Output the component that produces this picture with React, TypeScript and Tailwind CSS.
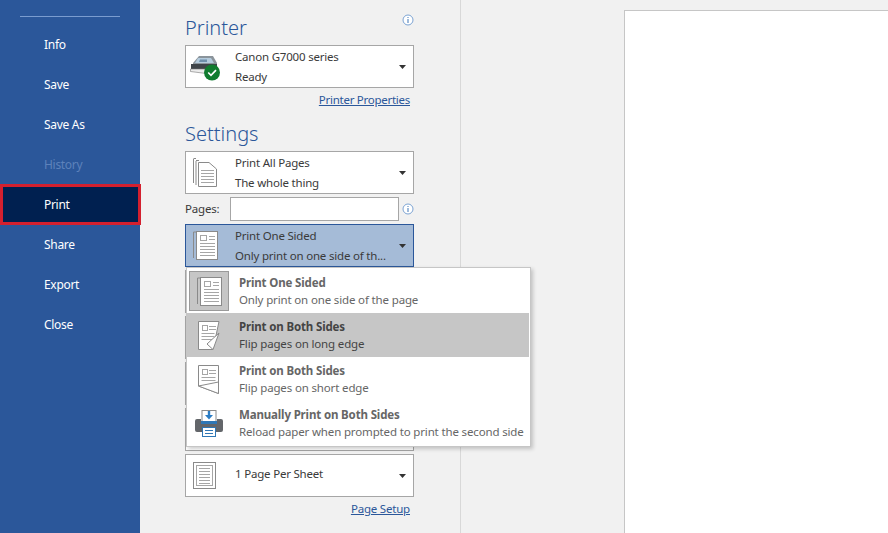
const font = "font-['Noto_Sans','Open_Sans',sans-serif]";

function Caret() {
  return (
    <svg width="7" height="4" viewBox="0 0 7 4" className="mr-[1px] shrink-0">
      <path d="M0 0H7L3.5 4Z" fill="#333" />
    </svg>
  );
}

function Info() {
  return (
    <svg width="12" height="12" viewBox="0 0 12 12">
      <circle cx="6" cy="6" r="5" fill="#fff" stroke="#7ba3d3" />
      <rect x="5.5" y="3" width="1" height="1" fill="#3f77b8" />
      <rect x="5.5" y="5" width="1" height="4" fill="#3f77b8" />
    </svg>
  );
}

function PrinterIcon() {
  return (
    <svg width="30" height="26" viewBox="0 0 30 26">
      <path d="M3 8 L9 1 H23 L27 8 V14 H3Z" fill="#8b949b" />
      <path d="M8 3 H21 L24 8 H5Z" fill="#b4cbdd" />
      <path d="M10 4.5 H17 V7 H9Z" fill="#6f8fab" />
      <rect x="1" y="9" width="26" height="5" fill="#3f4449" />
      <path d="M0.5 14 H20 V19 L0.5 16.5Z" fill="#ececec" stroke="#777" strokeWidth="0.6" />
      <circle cx="22" cy="17.5" r="8" fill="#107c2f" />
      <path d="M18.2 17.5 L21 20.3 L26 15.2" stroke="#fff" strokeWidth="1.7" fill="none" />
    </svg>
  );
}

function Lines({ x, y, w, n, gap = 3 }: { x: number; y: number; w: number; n: number; gap?: number }) {
  return (
    <>
      {Array.from({ length: n }).map((_, i) => (
        <rect key={i} x={x} y={y + i * gap} width={w} height="1" fill="#a6a6a6" />
      ))}
    </>
  );
}

function StackIcon() {
  return (
    <svg width="24" height="29" viewBox="0 0 24 29">
      <path d="M.5 1 V25 M.5 .5 H3" stroke="#8a8a8a" fill="none" />
      <path d="M3 3 V27 M3 2.5 H6" stroke="#8a8a8a" fill="none" />
      <path d="M5.5 4.5 H16 L23.5 11 V28.5 H5.5Z" fill="#fff" stroke="#8a8a8a" />
      <Lines x={8} y={12} w={13} n={5} gap={3} />
    </svg>
  );
}

function SidedIcon({ stroke = "#8a8a8a" }: { stroke?: string }) {
  return (
    <svg width="25" height="29" viewBox="0 0 25 29">
      <path d="M.5 1 V27 M3 1 H.5" stroke={stroke} fill="none" />
      <rect x="3.5" y=".5" width="21" height="28" fill="#fff" stroke={stroke} />
      <rect x="7.5" y="4.5" width="6" height="5" fill="none" stroke="#a6a6a6" />
      <Lines x={16} y={5} w={6} n={2} gap={3} />
      <Lines x={7} y={12} w={15} n={5} gap={3} />
    </svg>
  );
}

function LongEdgeIcon() {
  return (
    <svg width="22" height="29" viewBox="0 0 22 29">
      <path d="M.5 .5 H21 L15 28.5 H.5Z" fill="#fff" stroke="#8a8a8a" />
      <rect x="4.5" y="4.5" width="5" height="5" fill="none" stroke="#a6a6a6" />
      <Lines x={11} y={5} w={7} n={2} gap={3} />
      <Lines x={3.5} y={12} w={13} n={3} gap={3} />
      <path d="M21 12 L15 28.5 L9 23Z" fill="#fff" stroke="#8a8a8a" />
    </svg>
  );
}

function ShortEdgeIcon() {
  return (
    <svg width="22" height="29" viewBox="0 0 22 29">
      <path d="M.5 .5 H20.5 V28.5 L.5 21Z" fill="#fff" stroke="#8a8a8a" />
      <rect x="4.5" y="4.5" width="5" height="5" fill="none" stroke="#a6a6a6" />
      <Lines x={11} y={5} w={7} n={2} gap={3} />
      <Lines x={3.5} y={12} w={14} n={2} gap={3} />
      <path d="M.5 21 L20.5 17 V28.5Z" fill="#fff" stroke="#8a8a8a" />
    </svg>
  );
}

function ManualIcon() {
  return (
    <svg width="28" height="27" viewBox="0 0 28 27">
      <rect x="7" y=".5" width="14" height="11" fill="#fff" stroke="#8a8a8a" />
      <path d="M14 1 V6" stroke="#2b7cc4" strokeWidth="2.4" />
      <path d="M10 5 H18 L14 9.5Z" fill="#2b7cc4" />
      <path d="M2 9 H6 V12 H22 V9 H26 Q28 9 28 11 V20 Q28 22 26 22 H2 Q0 22 0 20 V11 Q0 9 2 9Z" fill="#63666a" />
      <rect x="6" y="11" width="16" height="3" fill="#2f77b5" />
      <rect x="7.5" y="17.5" width="13" height="9" fill="#fff" stroke="#2f77b5" />
      <path d="M10 20.5 H18 M10 23.5 H18" stroke="#2f77b5" />
    </svg>
  );
}

function SheetIcon() {
  return (
    <svg width="23" height="27" viewBox="0 0 23 27">
      <rect x=".5" y=".5" width="22" height="26" fill="#fff" stroke="#8a8a8a" />
      <rect x="3.5" y="3.5" width="16" height="20" fill="none" stroke="#a6a6a6" />
      <Lines x={6} y={6} w={11} n={6} gap={3} />
    </svg>
  );
}

function Dropdown({
  icon,
  title,
  sub,
  active,
}: {
  icon?: React.ReactNode;
  title?: string;
  sub?: string;
  active?: boolean;
}) {
  return (
    <div
      className={`flex h-[43px] w-[229px] items-center border pr-[6px] ${
        active ? "border-[#2b579a] bg-[#a5bbd7]" : "border-[#a6a6a6] bg-white"
      }`}
    >
      <div className="flex w-[49px] shrink-0 pl-[7px]">{icon}</div>
      <div
        className={`flex-1 text-[11.5px] leading-[20px] tracking-[-0.2px] whitespace-nowrap text-[#3a3a3a] ${
          sub ? "" : "pb-[3px]"
        }`}
      >
        {title && <div>{title}</div>}
        {sub && <div>{sub}</div>}
      </div>
      {(title || sub) && <Caret />}
    </div>
  );
}

function MenuItem({
  icon,
  title,
  sub,
  selected,
  hover,
}: {
  icon: React.ReactNode;
  title: string;
  sub: string;
  selected?: boolean;
  hover?: boolean;
}) {
  return (
    <div className={`mr-px flex h-[44px] items-center ${hover ? "bg-[#c6c6c6]" : ""}`}>
      <div
        className={`ml-[2px] flex h-[40px] w-[40px] items-center justify-center ${
          selected ? "border border-[#9a9a9a] bg-[#c6c6c6]" : ""
        }`}
      >
        {icon}
      </div>
      <div
        className={`ml-[10px] text-[11.5px] leading-[17px] tracking-[-0.15px] whitespace-nowrap ${
          hover ? "text-[#444]" : "text-[#666]"
        }`}
      >
        <div className="font-bold">{title}</div>
        <div>{sub}</div>
      </div>
    </div>
  );
}

const nav = ["Info", "Save", "Save As", "History", "Print", "Share", "Export", "Close"];

export default function App() {
  return (
    <div className={`flex h-[533px] w-[888px] overflow-hidden bg-[#f1f1f1] ${font}`}>
      {/* Backstage nav */}
      <aside className="w-[140px] shrink-0 bg-[#2b579a] pt-[16px] text-[12px] tracking-[-0.3px] text-white">
        <div className="mx-[20px] mb-[8px] h-px bg-[#7a9ccf]" />
        {nav.map((item) =>
          item === "Print" ? (
            <div
              key={item}
              className="relative z-10 -mt-px flex h-[41px] w-[141px] items-center border-[3px] border-[#d3202f] bg-[#002050] pl-[41px]"
            >
              {item}
            </div>
          ) : (
            <div
              key={item}
              className={`flex h-[40px] items-center pl-[44px] ${item === "History" ? "text-[#5d82bb]" : ""}`}
            >
              {item}
            </div>
          ),
        )}
      </aside>

      {/* Settings column */}
      <section className="relative w-[321px] shrink-0 border-r border-[#d8d8d8] pl-[45px]">
        <div className="flex h-[45px] w-[229px] items-center justify-between">
          <h2 className="pt-[10px] text-[20px] font-light text-[#2b579a]">Printer</h2>
          <div className="mb-[6px]">
            <Info />
          </div>
        </div>
        <Dropdown
          icon={
            <div className="-ml-[3px] mt-[3px]">
              <PrinterIcon />
            </div>
          }
          title="Canon G7000 series"
          sub="Ready"
        />
        <div className="flex h-[24px] w-[225px] items-center justify-end text-[11.5px] tracking-[-0.27px] text-[#2b579a] underline">
          Printer Properties
        </div>
        <h2 className="flex h-[39px] items-center pb-[1px] pt-[5px] text-[20px] font-light text-[#2b579a]">Settings</h2>
        <div className="flex flex-col gap-[3px]">
          <Dropdown icon={<StackIcon />} title="Print All Pages" sub="The whole thing" />
          <div className="flex h-[24px] w-[229px] items-center text-[11.5px] tracking-[-0.2px] text-[#3a3a3a]">
            <span className="w-[45px]">Pages:</span>
            <div className="h-[24px] w-[169px] border border-[#a6a6a6] bg-white" />
            <div className="ml-[3px]">
              <Info />
            </div>
          </div>
          <Dropdown icon={<SidedIcon />} title="Print One Sided" sub="Only print on one side of th..." active />
          <Dropdown />
          <Dropdown />
          <Dropdown />
          <Dropdown />
          <Dropdown icon={<SheetIcon />} title="1 Page Per Sheet" />
        </div>
        <div className="flex h-[24px] w-[225px] items-center justify-end text-[11.5px] tracking-[-0.2px] text-[#2b579a] underline">
          Page Setup
        </div>

        {/* Open menu */}
        <div className="absolute left-[46px] top-[267px] h-[180px] w-[345px] border border-[#c6c6c6] bg-white py-[1px] shadow-[2px_2px_4px_rgba(0,0,0,0.2)]">
          <MenuItem icon={<SidedIcon />} title="Print One Sided" sub="Only print on one side of the page" selected />
          <MenuItem icon={<LongEdgeIcon />} title="Print on Both Sides" sub="Flip pages on long edge" hover />
          <MenuItem icon={<ShortEdgeIcon />} title="Print on Both Sides" sub="Flip pages on short edge" />
          <MenuItem
            icon={<ManualIcon />}
            title="Manually Print on Both Sides"
            sub="Reload paper when prompted to print the second side"
          />
        </div>
      </section>

      {/* Preview */}
      <main className="flex flex-1 pl-[163px] pt-[10px]">
        <div className="flex-1 border-l border-t border-[#c6c6c6] bg-white" />
      </main>
    </div>
  );
}
